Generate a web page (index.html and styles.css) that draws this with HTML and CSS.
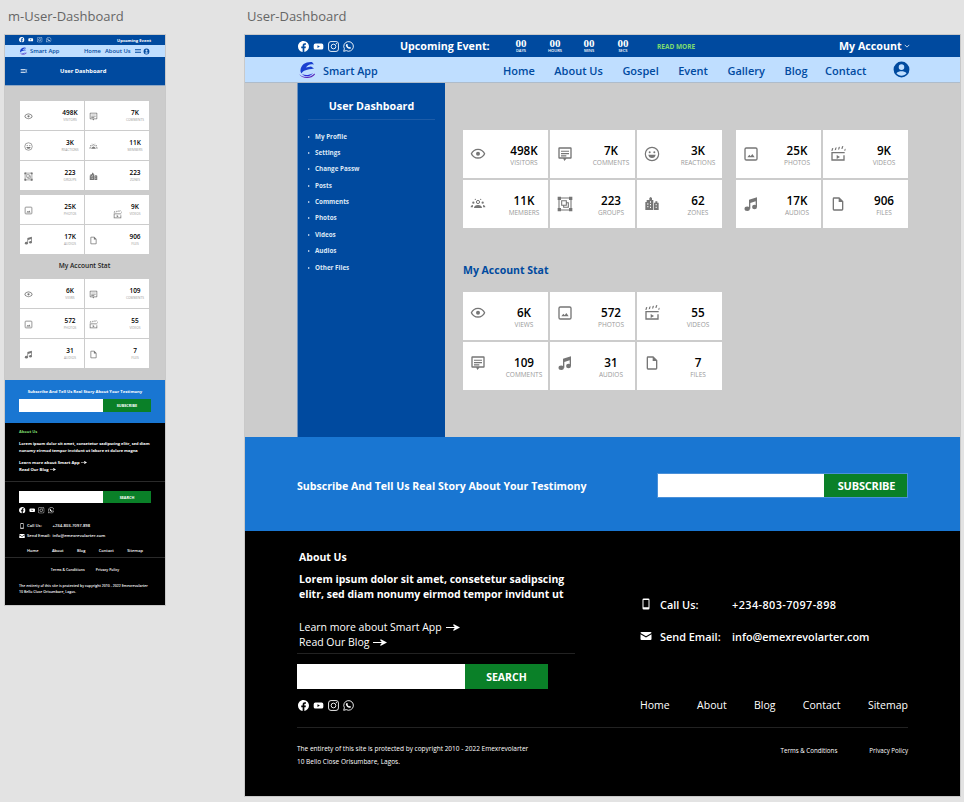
FILE: index.html
```html
<!DOCTYPE html>
<html lang="en">
<head>
<meta charset="UTF-8" />
<meta name="viewport" content="width=device-width, initial-scale=1" />
<title>User Dashboard</title>
<link rel="stylesheet" href="styles.css">
</head>
<body>

<svg class="sprite" aria-hidden="true">
  <symbol id="i-fb" viewBox="0 0 16 16"><path d="M16 8.049c0-4.446-3.582-8.05-8-8.05C3.58 0-.002 3.603-.002 8.05c0 4.017 2.926 7.347 6.75 7.951v-5.625h-2.03V8.05H6.75V6.275c0-2.017 1.195-3.131 3.022-3.131.876 0 1.791.157 1.791.157v1.98h-1.009c-.993 0-1.303.621-1.303 1.258v1.51h2.218l-.354 2.326H9.25V16c3.824-.604 6.75-3.934 6.75-7.951z"/></symbol>
  <symbol id="i-yt" viewBox="0 0 16 16"><path fill-rule="evenodd" d="M3.500 3.500h9A2.500 2.500 0 0 1 15 6v4a2.500 2.500 0 0 1-2.500 2.500h-9A2.500 2.500 0 0 1 1 10V6a2.500 2.500 0 0 1 2.500-2.500zm3 2.500v4l3.500-2z"/></symbol>
  <symbol id="i-ig" viewBox="0 0 16 16"><rect x=".8" y=".8" width="14.400" height="14.400" rx="3.600" fill="none" stroke="currentColor" stroke-width="1.300"/><circle cx="8" cy="8" r="3.400" fill="none" stroke="currentColor" stroke-width="1.300"/><circle cx="12.200" cy="3.800" r=".9"/></symbol>
  <symbol id="i-wa" viewBox="0 0 16 16"><path fill="none" stroke="currentColor" stroke-width="1.300" d="M1 15l1-3.700A7 7 0 1 1 4.700 14z"/><path d="M5.700 4.300c.5 0 .7.100.9.600l.4 1c.1.300 0 .5-.5 1.100.6 1.100 1.400 1.800 2.500 2.400.6-.6.800-.7 1.100-.6l1.100.6c.4.200.4.500.2 1-.3.700-1.100 1.100-2 1-2.600-.5-4.600-2.500-5.200-4.900-.1-.9.300-1.800 1.500-2.200z"/></symbol>
  <symbol id="i-user" viewBox="0 0 24 24"><path d="M12 2a10 10 0 1 0 0 20 10 10 0 0 0 0-20zm0 3.500a3.500 3.500 0 1 1 0 7 3.500 3.500 0 0 1 0-7zm0 14.300c-2.600 0-5-1.200-6.400-3.200 1.500-1.600 4-2.300 6.400-2.300s4.900.7 6.400 2.300c-1.400 2-3.800 3.200-6.400 3.200z"/></symbol>
  <symbol id="i-eye" viewBox="0 0 24 24"><path d="M12 6c3.790 0 7.170 2.130 8.820 5.500C19.170 14.870 15.790 17 12 17s-7.170-2.130-8.820-5.500C4.830 8.130 8.210 6 12 6m0-2C7 4 2.730 7.110 1 11.500 2.730 15.890 7 19 12 19s9.270-3.110 11-7.500C21.270 7.110 17 4 12 4z"/><circle cx="12" cy="11.500" r="3"/></symbol>
  <symbol id="i-comment" viewBox="0 0 24 24"><path d="M3.500 2h17A1.500 1.500 0 0 1 22 3.500v14a1.500 1.500 0 0 1-1.500 1.500H14l-3 3.500L9.500 19h-6A1.500 1.500 0 0 1 2 17.500v-14A1.500 1.500 0 0 1 3.500 2zM4 4v13h14.500H20V4z"/><path d="M6 7h12v1.800H6zM6 10.500h12v1.800H6zM6 14h8v1.800H6z"/></symbol>
  <symbol id="i-smile" viewBox="0 0 24 24"><circle cx="12" cy="12" r="10" fill="none" stroke="currentColor" stroke-width="1.800"/><circle cx="8.500" cy="9.500" r="1.500"/><circle cx="15.500" cy="9.500" r="1.500"/><path d="M6.500 13h11c-.3 3-2.500 5-5.500 5s-5.200-2-5.500-5z"/></symbol>
  <symbol id="i-members" viewBox="0 0 24 24"><circle cx="12" cy="9" r="2.400" fill="none" stroke="currentColor" stroke-width="1.500"/><path d="M6 18c0-3 2.500-4.500 6-4.500s6 1.500 6 4.500zM1 17c0-2 1-3 3.500-3.400L4.300 17zM23 17c0-2-1-3-3.500-3.400l.2 3.400z"/><circle cx="5" cy="10" r="1.700"/><circle cx="19" cy="10" r="1.700"/><circle cx="8" cy="5" r="1"/><circle cx="16" cy="5" r="1"/></symbol>
  <symbol id="i-group" viewBox="0 0 24 24"><path fill="none" stroke="currentColor" stroke-width="1.600" d="M3 3h18v18H3z"/><path d="M1 1h5v5H1zM18 1h5v5h-5zM1 18h5v5H1zM18 18h5v5h-5z"/><path fill="none" stroke="currentColor" stroke-width="1.600" d="M7 7h7v7H7zM10 14v3h7v-7h-3"/></symbol>
  <symbol id="i-zones" viewBox="0 0 24 24"><path d="M8 3l2-1.500L12 3v3h2v15H2V9h2V6h4zM15 10h2V8h3v2h2v11h-7z"/><path fill="#fff" d="M5 11h1.500v2H5zM9 8h1.500v2H9zM9 12h1.500v2H9zM5 15h1.500v2H5zM9 16h1.500v2H9zM17.500 12H19v2h-1.500zM17.500 16H19v2h-1.500z"/></symbol>
  <symbol id="i-photo" viewBox="0 0 24 24"><rect x="3" y="3" width="18" height="18" rx="2" fill="none" stroke="currentColor" stroke-width="2"/><path d="M6.500 17l3-4 2 2.500 2.500-3.500 3.500 5z"/></symbol>
  <symbol id="i-video" viewBox="0 0 24 24"><path d="M2 9h20v2H4v9h16v-6h2v8H2z"/><path d="M10 13.500l5 3-5 3z"/><path d="M2 7.500l1-4 2-.5-1 4zM7 6.500l1-4 2-.5-1 4zM12 5.500l1-4 2-.5-1 4zM17 4.500l1-4 2-.5-1 4z"/><path d="M22 4.500l1.500-.5-.5 3-1.500.5z"/></symbol>
  <symbol id="i-music" viewBox="0 0 24 24"><path d="M9 5.500L21 2v14.500h-2V8L11 10.500V19H9z"/><ellipse cx="6.300" cy="19" rx="4" ry="3.400"/><ellipse cx="17.300" cy="16.500" rx="3.700" ry="3.300"/></symbol>
  <symbol id="i-file" viewBox="0 0 24 24"><path d="M14 2H6a2 2 0 0 0-2 2v16a2 2 0 0 0 2 2h12a2 2 0 0 0 2-2V8zM6 20V4h7v5h5v11z"/></symbol>
  <symbol id="i-phone" viewBox="0 0 24 24"><path d="M7.500 1h9A2.500 2.500 0 0 1 19 3.500v17a2.500 2.500 0 0 1-2.500 2.500h-9A2.500 2.500 0 0 1 5 20.500v-17A2.500 2.500 0 0 1 7.500 1zM7 4v14.500h10V4z"/></symbol>
  <symbol id="i-mail" viewBox="0 0 24 24"><path d="M3 4h18a2 2 0 0 1 2 2L12 12.500 1 6a2 2 0 0 1 2-2zM1 8.500l11 6.500 11-6.500V18a2 2 0 0 1-2 2H3a2 2 0 0 1-2-2z"/></symbol>
  <symbol id="i-arrow" viewBox="0 0 16 8"><path d="M0 3.300h10L8 1l1-.7L16 4l-7 3.700-1-.7 2-2.300H0z"/></symbol>
  <symbol id="i-logo" viewBox="0 0 18 18"><path fill="#1a3fd0" d="M14 1C8 .5 3 3.500 2.500 9c-.2 1.600.3 2.600 1 3.500C5 9.500 9 8.500 16 7.500l-3-2L8 6.500C9.500 4 12 2.500 16 3.500z"/><path fill="#5a22b8" d="M1 13c3 3.500 11 4.500 15.500-.5l.5 1C13 18.500 4 18 1 13z"/><path fill="#2b2bd8" d="M4 13c3 1.500 7 1.500 11-1-3 4-8 4.500-11 1z"/></symbol>
  <symbol id="i-menu" viewBox="0 0 24 24"><path d="M3 6h18v2H3zM3 11h18v2H3zM3 16h18v2H3z"/></symbol>
  <symbol id="i-menu-back" viewBox="0 0 24 24"><path d="M2 6h15v2H2zM2 11h12v2H2zM2 16h15v2H2zM22 8l-4 4 4 4-1.400 1-5-5 5-5z"/></symbol>
</svg>

<!-- mobile artboard -->
<section class="frame frame-m">
  <h1 class="frame-title">m-User-Dashboard</h1>
  <div class="board mobile">
    <div class="topbar">
      <div class="social"><svg><use href="#i-fb"/></svg><svg><use href="#i-yt"/></svg><svg><use href="#i-ig"/></svg><svg><use href="#i-wa"/></svg></div>
      <b class="event">Upcoming Event</b>
    </div>
    <div class="nav">
      <svg class="logo"><use href="#i-logo"/></svg>
      <span class="brand">Smart App</span>
      <a class="m-home">Home</a>
      <a>About Us</a>
      <svg class="m-menu"><use href="#i-menu"/></svg>
      <svg class="m-user"><use href="#i-user"/></svg>
    </div>
    <div class="m-head">
      <svg><use href="#i-menu-back"/></svg>
      <b>User Dashboard</b>
    </div>
    <div class="main">
      <div class="stats">
        <div class="stat"><svg><use href="#i-eye"/></svg><div class="num"><b>498K</b><span>VISITORS</span></div></div>
        <div class="stat"><svg><use href="#i-comment"/></svg><div class="num"><b>7K</b><span>COMMENTS</span></div></div>
        <div class="stat"><svg><use href="#i-smile"/></svg><div class="num"><b>3K</b><span>REACTIONS</span></div></div>
        <div class="stat"><svg><use href="#i-members"/></svg><div class="num"><b>11K</b><span>MEMBERS</span></div></div>
        <div class="stat"><svg><use href="#i-group"/></svg><div class="num"><b>223</b><span>GROUPS</span></div></div>
        <div class="stat"><svg><use href="#i-zones"/></svg><div class="num"><b>223</b><span>ZONES</span></div></div>
      </div>
      <div class="stats">
        <div class="stat"><svg><use href="#i-photo"/></svg><div class="num"><b>25K</b><span>PHOTOS</span></div></div>
        <div class="stat"><svg class="nudged"><use href="#i-video"/></svg><div class="num"><b>9K</b><span>VIDEOS</span></div></div>
        <div class="stat"><svg><use href="#i-music"/></svg><div class="num"><b>17K</b><span>AUDIOS</span></div></div>
        <div class="stat"><svg><use href="#i-file"/></svg><div class="num"><b>906</b><span>FILES</span></div></div>
      </div>
      <h2 class="m-stat-title">My Account Stat</h2>
      <div class="stats">
        <div class="stat"><svg><use href="#i-eye"/></svg><div class="num"><b>6K</b><span>VIEWS</span></div></div>
        <div class="stat"><svg><use href="#i-comment"/></svg><div class="num"><b>109</b><span>COMMENTS</span></div></div>
        <div class="stat"><svg><use href="#i-photo"/></svg><div class="num"><b>572</b><span>PHOTOS</span></div></div>
        <div class="stat"><svg><use href="#i-video"/></svg><div class="num"><b>55</b><span>VIDEOS</span></div></div>
        <div class="stat"><svg><use href="#i-music"/></svg><div class="num"><b>31</b><span>AUDIOS</span></div></div>
        <div class="stat"><svg><use href="#i-file"/></svg><div class="num"><b>7</b><span>FILES</span></div></div>
      </div>
    </div>
    <div class="subscribe">
      <b>Subscribe And Tell Us Real Story About Your Testimony</b>
      <div class="field"><i></i><button>SUBSCRIBE</button></div>
    </div>
    <footer class="footer">
      <div class="m-pad m-about">
        <b class="m-about-title">About Us</b>
        <b class="lorem">Lorem ipsum dolor sit amet, consetetur sadipscing elitr, sed diam nonumy eirmod tempor invidunt ut labore et dolore magna</b>
        <b class="more">Learn more about Smart App <svg><use href="#i-arrow"/></svg></b>
        <b class="more">Read Our Blog <svg><use href="#i-arrow"/></svg></b>
      </div>
      <div class="m-pad m-tools">
        <div class="field"><i></i><button>SEARCH</button></div>
        <div class="social"><svg><use href="#i-fb"/></svg><svg><use href="#i-yt"/></svg><svg><use href="#i-ig"/></svg><svg><use href="#i-wa"/></svg></div>
        <div class="contact"><svg><use href="#i-phone"/></svg><b class="c-label">Call Us:</b><b>+234-803-7097-898</b></div>
        <div class="contact"><svg><use href="#i-mail"/></svg><b class="c-label">Send Email:</b><b>info@emexrevolarter.com</b></div>
        <div class="links"><a>Home</a><a>About</a><a>Blog</a><a>Contact</a><a>Sitemap</a></div>
      </div>
      <div class="m-pad m-legal">
        <div class="terms"><a>Terms &amp; Conditions</a><a>Privacy Policy</a></div>
        <p class="copy">The entirety of this site is protected by copyright  2010 - 2022 Emexrevolarter<br>10 Bello Close Orisumbare, Lagos.</p>
      </div>
    </footer>
  </div>
</section>

<!-- desktop artboard -->
<section class="frame frame-d">
  <h1 class="frame-title">User-Dashboard</h1>
  <div class="board desktop">
    <div class="topbar">
      <div class="social"><svg><use href="#i-fb"/></svg><svg><use href="#i-yt"/></svg><svg><use href="#i-ig"/></svg><svg><use href="#i-wa"/></svg></div>
      <b class="event">Upcoming Event:</b>
      <div class="count">
        <div><b>00</b><span>DAYS</span></div>
        <div><b>00</b><span>HOURS</span></div>
        <div><b>00</b><span>MINS</span></div>
        <div><b>00</b><span>SECS</span></div>
      </div>
      <b class="read">READ MORE</b>
      <b class="account">My Account <svg viewBox="0 0 8 8"><path d="M1 2.500l3 3 3-3" fill="none" stroke="currentColor"/></svg></b>
    </div>
    <div class="nav">
      <svg class="logo"><use href="#i-logo"/></svg>
      <span class="brand">Smart App</span>
      <nav class="menu"><a>Home</a><a>About Us</a><a>Gospel</a><a>Event</a><a>Gallery</a><a>Blog</a><a>Contact</a></nav>
      <svg class="user"><use href="#i-user"/></svg>
    </div>
    <div class="main">
      <aside class="side">
        <h2>User Dashboard</h2>
        <ul>
          <li>My Profile</li>
          <li>Settings</li>
          <li>Change Passw</li>
          <li>Posts</li>
          <li>Comments</li>
          <li>Photos</li>
          <li>Videos</li>
          <li>Audios</li>
          <li>Other Files</li>
        </ul>
      </aside>
      <div class="content">
        <div class="stat-row">
          <div class="stats cols-3">
            <div class="stat"><svg><use href="#i-eye"/></svg><div class="num"><b>498K</b><span>VISITORS</span></div></div>
            <div class="stat"><svg><use href="#i-comment"/></svg><div class="num"><b>7K</b><span>COMMENTS</span></div></div>
            <div class="stat"><svg><use href="#i-smile"/></svg><div class="num"><b>3K</b><span>REACTIONS</span></div></div>
            <div class="stat"><svg><use href="#i-members"/></svg><div class="num"><b>11K</b><span>MEMBERS</span></div></div>
            <div class="stat"><svg><use href="#i-group"/></svg><div class="num"><b>223</b><span>GROUPS</span></div></div>
            <div class="stat"><svg><use href="#i-zones"/></svg><div class="num"><b>62</b><span>ZONES</span></div></div>
          </div>
          <div class="stats cols-2">
            <div class="stat"><svg><use href="#i-photo"/></svg><div class="num"><b>25K</b><span>PHOTOS</span></div></div>
            <div class="stat"><svg><use href="#i-video"/></svg><div class="num"><b>9K</b><span>VIDEOS</span></div></div>
            <div class="stat"><svg><use href="#i-music"/></svg><div class="num"><b>17K</b><span>AUDIOS</span></div></div>
            <div class="stat"><svg><use href="#i-file"/></svg><div class="num"><b>906</b><span>FILES</span></div></div>
          </div>
        </div>
        <h2 class="stat-title">My Account Stat</h2>
        <div class="stats cols-3">
          <div class="stat"><svg><use href="#i-eye"/></svg><div class="num"><b>6K</b><span>VIEWS</span></div></div>
          <div class="stat"><svg><use href="#i-photo"/></svg><div class="num"><b>572</b><span>PHOTOS</span></div></div>
          <div class="stat"><svg><use href="#i-video"/></svg><div class="num"><b>55</b><span>VIDEOS</span></div></div>
          <div class="stat"><svg><use href="#i-comment"/></svg><div class="num"><b>109</b><span>COMMENTS</span></div></div>
          <div class="stat"><svg><use href="#i-music"/></svg><div class="num"><b>31</b><span>AUDIOS</span></div></div>
          <div class="stat"><svg><use href="#i-file"/></svg><div class="num"><b>7</b><span>FILES</span></div></div>
        </div>
      </div>
    </div>
    <div class="subscribe">
      <b>Subscribe And Tell Us Real Story About Your Testimony</b>
      <div class="field"><i></i><button>SUBSCRIBE</button></div>
    </div>
    <footer class="footer">
      <div class="foot-top">
        <div class="foot-left">
          <b class="about-title">About Us</b>
          <b class="lorem">Lorem ipsum dolor sit amet, consetetur sadipscing elitr, sed diam nonumy eirmod tempor invidunt ut</b>
          <div class="more-list">
            <span class="more">Learn more about Smart App <svg><use href="#i-arrow"/></svg></span>
            <span class="more">Read Our Blog <svg><use href="#i-arrow"/></svg></span>
          </div>
          <div class="field"><i></i><button>SEARCH</button></div>
          <div class="social"><svg><use href="#i-fb"/></svg><svg><use href="#i-yt"/></svg><svg><use href="#i-ig"/></svg><svg><use href="#i-wa"/></svg></div>
        </div>
        <div class="foot-right">
          <div class="contact"><svg><use href="#i-phone"/></svg><b class="c-label">Call Us:</b><b class="c-phone">+234-803-7097-898</b></div>
          <div class="contact"><svg><use href="#i-mail"/></svg><b class="c-label">Send Email:</b><b>info@emexrevolarter.com</b></div>
          <div class="links"><a>Home</a><a>About</a><a>Blog</a><a>Contact</a><a>Sitemap</a></div>
        </div>
      </div>
      <div class="foot-bottom">
        <p class="copy">The entirety of this site is protected by copyright  2010 - 2022 Emexrevolarter<br>10 Bello Close Orisumbare, Lagos.</p>
        <div class="terms"><a>Terms &amp; Conditions</a><a>Privacy Policy</a></div>
      </div>
    </footer>
  </div>
</section>

</body>
</html>
```

FILE: styles.css
```css
* { box-sizing: border-box; }
body { margin: 0; height: 802px; overflow: hidden; display: flex; background: #e3e3e3; font-family: "Open Sans", "Noto Sans", sans-serif; color: #000; }
b { font-weight: 700; }
p, h1, h2, ul { margin: 0; padding: 0; }
i { display: block; }
.sprite { display: none; }
svg { fill: currentColor; display: block; flex: none; }

.frame { flex: none; }
.frame-m { width: 160px; margin-left: 5px; }
.frame-d { width: 715px; margin-left: 80px; }
.frame-title { height: 35px; padding: 7px 0 0 3px; font-size: 13px; line-height: 18px; font-weight: 400; color: #666; white-space: nowrap; }
.frame-d .frame-title { padding-left: 2px; }
.board { outline: 1px solid #c9c9c9; }

.topbar { display: flex; align-items: center; background: #004a9f; color: #fff; }
.nav { display: flex; align-items: center; background: #bfdeff; color: #004a9f; border-bottom: 1px solid #aebccb; }
.social { display: flex; }
.main { background: #ccc; }
.stats { display: grid; }
.stat { display: flex; background: #fff; color: #767676; }
.num { text-align: center; }
.num b, .num span { display: block; white-space: nowrap; }
.num b { color: #000; font-weight: 600; }
.num span { color: #9a9a9a; }
.subscribe { background: #1976d2; color: #fff; }
.field { display: flex; background: #fff; }
.field i { flex: 1; }
.field button { border: 0; padding: 0; background: #0a8028; color: #fff; font-family: inherit; font-weight: 600; }
.footer { background: #000; color: #fff; }
.contact { display: flex; align-items: center; }
.contact b { font-weight: 600; white-space: nowrap; }
.links, .terms { display: flex; justify-content: space-between; }
.more { display: flex; align-items: center; white-space: nowrap; }

/* desktop */
.desktop .topbar { height: 22px; padding-left: 53px; }
.desktop .social { gap: 4px; }
.desktop .social svg { width: 11px; height: 11px; }
.desktop .event { margin-left: 46px; width: 111px; font-size: 10.700px; white-space: nowrap; }
.count { display: flex; gap: 14px; width: 122px; }
.count div { width: 20px; text-align: center; line-height: 1; }
.count b, .count span { display: block; white-space: nowrap; }
.count b { font-family: "Liberation Serif", serif; font-size: 11px; line-height: 10px; }
.count span { font-size: 4px; line-height: 6px; font-weight: 600; }
.read { margin-left: 24px; width: 182px; color: #7ddc6e; font-size: 6.500px; white-space: nowrap; }
.account { display: flex; align-items: center; gap: 2px; font-size: 10.700px; white-space: nowrap; }
.account svg { width: 6px; height: 6px; }
.desktop .nav { height: 26px; padding: 1px 0 0 53px; }
.desktop .logo { width: 18px; height: 18px; margin-top: -1px; }
.desktop .brand { margin-left: 7px; width: 180px; font-size: 10.800px; font-weight: 600; white-space: nowrap; }
.menu { display: flex; gap: 19.500px; width: 389px; font-size: 11px; font-weight: 600; white-space: nowrap; }
.menu a:last-child { margin-left: -2px; }
.user { width: 19px; height: 19px; margin-top: -1px; }
.desktop .main { display: flex; height: 354px; padding-left: 52px; }
.side { width: 148px; background: #004a9f; color: #fff; border-left: 1px solid #6f93bf; }
.side h2 { margin: 0 10px; padding: 15px 0 5px; height: 37px; text-align: center; font-size: 10.700px; line-height: 17px; font-weight: 700; border-bottom: 1px solid #1d5ca8; }
.side ul { list-style: none; padding: 8.500px 0 0 17px; }
.side li { position: relative; height: 16.400px; font-size: 6.300px; line-height: 16.400px; font-weight: 700; color: #dce7f5; white-space: nowrap; }
.side li::before { content: ""; position: absolute; left: -7px; top: 7px; border-left: 2px solid #dce7f5; border-top: 1.500px solid transparent; border-bottom: 1.500px solid transparent; }
.content { padding: 47px 0 0 18px; }
.stat-row { display: flex; gap: 14px; }
.desktop .stats { grid-auto-rows: 48px; gap: 2px; }
.cols-3 { grid-template-columns: repeat(3, 85px); }
.cols-2 { grid-template-columns: repeat(2, 85px); }
.desktop .stat { padding: 0 0 0 7px; }
.desktop .stat svg { width: 16px; height: 16px; margin-top: 16px; }
.desktop .stat-title + .stats .stat svg { margin-top: 13px; }
.desktop .num { width: 48px; margin-left: auto; padding-top: 13px; }
.desktop .num b { font-size: 11.700px; line-height: 14px; }
.desktop .num span { font-size: 6.500px; line-height: 9px; margin-top: 1px; }
.stat-title { margin: 34px 0 14px; font-size: 10.500px; line-height: 16px; font-weight: 700; color: #004a9f; }
.desktop .subscribe { height: 94px; display: flex; align-items: center; justify-content: space-between; padding: 2px 52px 0; font-size: 10.600px; }
.desktop .subscribe > b { margin-top: 2px; }
.desktop .subscribe .field { width: 251px; height: 25px; border: 1px solid #4a90d9; }
.desktop .subscribe button { width: 83px; padding-left: 2px; font-size: 11px; font-weight: 700; letter-spacing: -0.200px; }
.desktop .footer { height: 265px; padding: 0 52px; }
.foot-top { display: flex; height: 197px; border-bottom: 1px solid #222; }
.foot-left { width: 278px; padding-top: 18px; }
.about-title { display: block; margin-left: 2px; font-size: 10.500px; line-height: 16px; }
.desktop .lorem { display: block; margin: 7px 0 0 2px; width: 272px; font-size: 10.500px; line-height: 15px; }
.more-list { margin-top: 18px; border-bottom: 1px solid #222; padding: 0 0 3px 2px; font-size: 10.500px; line-height: 15px; }
.desktop .more svg { width: 14px; height: 7px; margin-left: 4px; }
.foot-left .field { width: 251px; height: 25px; margin-top: 10px; }
.foot-left button { width: 83px; font-size: 10.500px; font-weight: 700; }
.foot-left .social { gap: 4px; margin: 11px 0 0 1px; }
.foot-left .social svg { width: 11px; height: 11px; }
.foot-right { margin-left: 65px; width: 268px; padding-top: 65px; }
.desktop .contact { height: 16px; margin-bottom: 16px; font-size: 10.900px; }
.desktop .contact svg { width: 12px; height: 12px; }
.desktop .c-label { width: 72px; margin-left: 8px; }
.c-phone { letter-spacing: 0.400px; }
.desktop .links { margin-top: 53px; font-size: 10.500px; line-height: 16px; }
.foot-bottom { display: flex; justify-content: space-between; padding-top: 14px; }
.desktop .copy { font-size: 6.500px; line-height: 13px; }
.desktop .terms { gap: 32px; font-size: 6.200px; line-height: 13px; padding-top: 2px; }

/* mobile */
.mobile .topbar { height: 10px; padding: 0 14px; justify-content: space-between; }
.mobile .social { gap: 3.500px; }
.mobile .social svg { width: 5.500px; height: 5.500px; }
.mobile .event { font-size: 4.200px; white-space: nowrap; }
.mobile .nav { height: 12px; padding-left: 14px; font-size: 5.800px; font-weight: 600; border: 0; white-space: nowrap; }
.mobile .logo { width: 8px; height: 8px; }
.mobile .brand { margin-left: 3px; width: 54px; }
.mobile .m-home { width: 21px; }
.mobile .nav a { flex: none; }
.m-menu { width: 8px; height: 8px; margin-left: 3px; }
.m-user { width: 7px; height: 7px; margin-left: 1px; }
.m-head { display: flex; align-items: center; height: 29px; padding-left: 15px; background: #004a9f; color: #fff; font-size: 5.800px; border-bottom: 1px solid #8fa7c4; white-space: nowrap; }
.m-head svg { width: 8px; height: 8px; }
.m-head b { margin-left: 32px; }
.mobile .main { height: 294px; padding: 15px 16px 0 15px; }
.mobile .stats { grid-template-columns: 64px 64px; grid-auto-rows: 29px; gap: 1px; margin-bottom: 5px; }
.mobile .stat { padding: 8px 0 0 3.500px; }
.mobile .stat svg { width: 9px; height: 9px; margin-top: 2.500px; }
.mobile .stat svg.nudged { margin: 6.500px 0 0 24px; }
.mobile .num { width: 24px; margin-left: auto; margin-right: 2px; }
.mobile .num b { font-size: 6.500px; line-height: 8px; margin-top: -0.500px; }
.mobile .num span { font-size: 3.200px; line-height: 5px; margin-top: 1.500px; }
.m-stat-title { height: 20px; text-align: center; font-size: 6.600px; line-height: 14px; font-weight: 600; color: #222; }
.mobile .subscribe { height: 43px; padding: 9px 14px 0; text-align: center; font-size: 4.200px; line-height: 6px; white-space: nowrap; }
.mobile .subscribe .field { height: 13px; margin-top: 4px; }
.mobile .subscribe button, .m-tools button { width: 48px; font-size: 3.800px; font-weight: 700; }
.mobile .footer { height: 182px; }
.m-pad { padding: 0 14px; }
.m-about { height: 59px; padding-top: 6px; border-bottom: 1px solid #2a2a2a; font-size: 4px; }
.m-about-title { display: block; color: #7ddc6e; line-height: 6px; }
.m-about .lorem { display: block; margin-top: 6px; line-height: 6.500px; }
.m-about .more { font-size: 4.200px; line-height: 7px; }
.m-about .lorem + .more { margin-top: 5px; }
.m-about .more svg { width: 6px; height: 3px; margin-left: 1px; }
.m-tools { height: 76px; padding-top: 9px; border-bottom: 1px solid #2a2a2a; }
.m-tools .field { height: 12px; }
.m-tools .social { gap: 3px; margin-top: 4px; }
.m-tools .social svg { width: 6.500px; height: 6.500px; }
.mobile .contact { height: 10px; font-size: 4.200px; }
.m-tools .social + .contact { margin-top: 7px; }
.mobile .contact svg { width: 6px; height: 6px; margin-right: 2px; }
.mobile .c-label { width: 25.500px; }
.mobile .links { margin-top: 7px; padding: 0 8px; font-size: 4px; font-weight: 600; }
.m-legal { padding-top: 9px; }
.mobile .terms { justify-content: center; gap: 11px; font-size: 3.600px; line-height: 6px; font-weight: 600; }
.mobile .copy { margin-top: 10px; font-size: 3.500px; line-height: 6px; font-weight: 600; white-space: nowrap; }
```
